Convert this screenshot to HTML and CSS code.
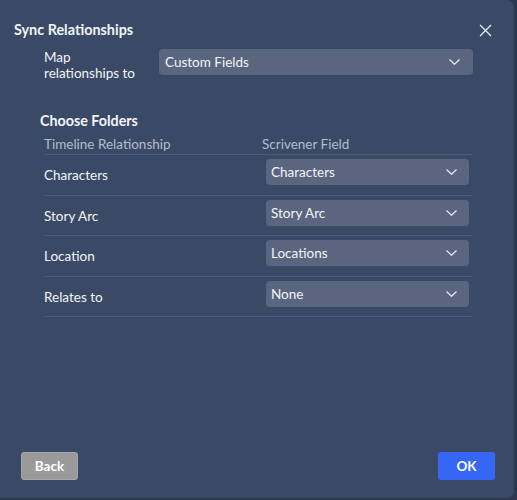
FILE: index.html
```html
<!DOCTYPE html>
<html>
<head>
<meta charset="utf-8">
<link rel="stylesheet" href="styles.css">
</head>
<body>
<div class="dialog">
  <div class="head">
    <h1 class="title">Sync Relationships</h1>
    <button class="close" aria-label="Close">
      <svg width="13" height="13" viewBox="0 0 13 13"><path d="M1 1 L12 12 M12 1 L1 12" stroke="#e8ebf0" stroke-width="1.3" fill="none"/></svg>
    </button>
  </div>
  <div class="map">
    <div class="map-label">Map<br>relationships to</div>
    <div class="select select-main">
      <span>Custom Fields</span>
      <svg class="chev" width="11" height="6" viewBox="0 0 11 6"><path d="M0.5 0.5 L5.5 5.3 L10.5 0.5" stroke="#e8ebf0" stroke-width="1.2" fill="none"/></svg>
    </div>
  </div>
  <h2 class="section">Choose Folders</h2>
  <div class="table">
    <div class="row header">
      <div class="col1">Timeline Relationship</div>
      <div class="col2">Scrivener Field</div>
    </div>
    <div class="row">
      <div class="col1 label">Characters</div>
      <div class="col2"><div class="select"><span>Characters</span><svg class="chev" width="11" height="6" viewBox="0 0 11 6"><path d="M0.5 0.5 L5.5 5.3 L10.5 0.5" stroke="#e8ebf0" stroke-width="1.2" fill="none"/></svg></div></div>
    </div>
    <div class="row">
      <div class="col1 label">Story Arc</div>
      <div class="col2"><div class="select"><span>Story Arc</span><svg class="chev" width="11" height="6" viewBox="0 0 11 6"><path d="M0.5 0.5 L5.5 5.3 L10.5 0.5" stroke="#e8ebf0" stroke-width="1.2" fill="none"/></svg></div></div>
    </div>
    <div class="row">
      <div class="col1 label">Location</div>
      <div class="col2"><div class="select"><span>Locations</span><svg class="chev" width="11" height="6" viewBox="0 0 11 6"><path d="M0.5 0.5 L5.5 5.3 L10.5 0.5" stroke="#e8ebf0" stroke-width="1.2" fill="none"/></svg></div></div>
    </div>
    <div class="row">
      <div class="col1 label">Relates to</div>
      <div class="col2"><div class="select"><span>None</span><svg class="chev" width="11" height="6" viewBox="0 0 11 6"><path d="M0.5 0.5 L5.5 5.3 L10.5 0.5" stroke="#e8ebf0" stroke-width="1.2" fill="none"/></svg></div></div>
    </div>
  </div>
  <div class="spacer"></div>
  <div class="footer">
    <button class="btn btn-back">Back</button>
    <button class="btn btn-ok">OK</button>
  </div>
</div>
</body>
</html>
```
FILE: styles.css
```css
html, body {
  margin: 0;
  padding: 0;
  background: #2c384d;
  width: 517px;
  height: 500px;
  overflow: hidden;
}
body {
  font-family: Lato, "Noto Sans", sans-serif;
  color: #f2f4f7;
}
.dialog {
  width: 514px;
  height: 498px;
  background: #3a4a66;
  border-radius: 0 7px 7px 0;
  display: flex;
  flex-direction: column;
  box-sizing: border-box;
}
.head {
  display: flex;
  justify-content: space-between;
  align-items: center;
  padding: 20px 22px 0 14px;
  height: 20px;
}
.title {
  margin: 0;
  font-size: 14.4px;
  font-weight: 700;
  line-height: 20px;
}
.close {
  background: none;
  border: 0;
  padding: 0;
  width: 13px;
  height: 13px;
  display: flex;
  margin-top: 1px;
}
.map {
  display: flex;
  align-items: flex-start;
  padding: 8px 0 0 44px;
}
.map-label {
  width: 115px;
  font-size: 13.5px;
  line-height: 16px;
  padding-top: 1px;
}
.select {
  display: flex;
  align-items: center;
  justify-content: space-between;
  background: #5a6680;
  border-radius: 4px;
  height: 26px;
  box-sizing: border-box;
  padding: 0 12px 0 5px;
  font-size: 13.5px;
}
.select-main {
  width: 314px;
  margin-top: 1px;
  padding-left: 6px;
  padding-right: 13px;
}
.section {
  margin: 31px 0 0 40px;
  font-size: 14.3px;
  font-weight: 700;
  line-height: 18px;
}
.table {
  margin: 7px 42px 0 44px;
}
.row {
  display: flex;
  border-bottom: 1px solid #4e5c78;
  height: 40.5px;
  box-sizing: border-box;
}
.row.header {
  height: 18px;
  color: #b4bccb;
  font-size: 13.5px;
  line-height: 14px;
  align-items: flex-start;
}
.col1 {
  width: 218px;
}
.col2 {
  flex: 1;
}
.row .label {
  font-size: 13.5px;
  line-height: 14px;
  padding-top: 13px;
}
.row .col2 .select {
  margin: 4px 3px 0 4px;
}
.spacer {
  flex: 1;
}
.footer {
  display: flex;
  justify-content: space-between;
  padding: 0 19px 18px 21px;
}
.btn {
  height: 28px;
  border: 0;
  border-radius: 3px;
  font-family: Lato, "Noto Sans", sans-serif;
  font-size: 13.5px;
  font-weight: 700;
  color: #ffffff;
  padding: 0;
  width: 57px;
}
.btn-back {
  background: #9a9a9a;
  border: 1px solid #a8a8a8;
}
.btn-ok {
  background: #3566f5;
}
```
